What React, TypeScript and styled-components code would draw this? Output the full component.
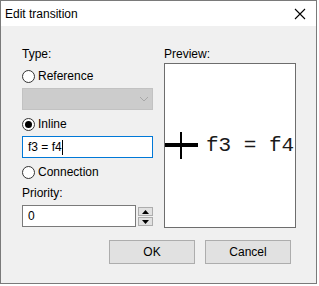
import React from 'react';
import styled, { createGlobalStyle } from 'styled-components';

const GlobalStyle = createGlobalStyle`
  html, body {
    margin: 0;
    padding: 0;
    background: #ffffff;
  }
  body {
    font-family: 'Liberation Sans', Arial, sans-serif;
    font-size: 12px;
    color: #000;
  }
  * {
    box-sizing: border-box;
  }
`;

const Window = styled.div`
  width: 317px;
  height: 284px;
  border: 1px solid #7a7a7a;
  background: #f0f0f0;
  display: flex;
  flex-direction: column;
`;

const TitleBar = styled.div`
  height: 25px;
  background: #ffffff;
  display: flex;
  align-items: center;
  justify-content: space-between;
  padding-left: 4px;
  padding-right: 10px;
  flex-shrink: 0;

  & span {
    font-size: 12px;
    color: #000;
  }
`;

const Body = styled.div`
  flex: 1;
  display: flex;
  flex-direction: column;
  padding: 21px 20px 0 21px;
`;

const Columns = styled.div`
  display: flex;
  gap: 11px;
`;

const LeftColumn = styled.div`
  width: 131px;
  display: flex;
  flex-direction: column;
`;

const RightColumn = styled.div`
  width: 132px;
  display: flex;
  flex-direction: column;
`;

const Label = styled.div<{ $mt?: number }>`
  height: 15px;
  line-height: 15px;
  margin-top: ${(p) => p.$mt ?? 0}px;
`;

const RadioRow = styled.label<{ $mt?: number }>`
  display: flex;
  align-items: center;
  gap: 3px;
  height: 16px;
  margin-top: ${(p) => p.$mt ?? 0}px;
`;

const RadioCircle = styled.span<{ $checked?: boolean }>`
  width: 13px;
  height: 13px;
  border-radius: 50%;
  border: 1px solid #333333;
  background: #ffffff;
  display: flex;
  align-items: center;
  justify-content: center;

  &::after {
    content: '';
    display: ${(p) => (p.$checked ? 'block' : 'none')};
    width: 7px;
    height: 7px;
    border-radius: 50%;
    background: #000;
  }
`;

const Select = styled.div`
  margin-top: 4px;
  height: 22px;
  flex-shrink: 0;
  background: #cccccc;
  border: 1px solid #c2c2c2;
  display: flex;
  align-items: center;
  justify-content: flex-end;
  padding-right: 3px;
`;

const TextInput = styled.div<{ $focused?: boolean; $mt?: number; $grow?: boolean }>`
  margin-top: ${(p) => p.$mt ?? 0}px;
  height: 22px;
  flex-shrink: 0;
  flex-grow: ${(p) => (p.$grow ? 1 : 0)};
  background: #ffffff;
  border: 1px solid ${(p) => (p.$focused ? '#0078d7' : '#7a7a7a')};
  display: flex;
  align-items: center;
  padding-left: 5px;
  font-size: 12px;
`;

const Caret = styled.span`
  display: inline-block;
  width: 1px;
  height: 15px;
  background: #000;
`;

const SpinRow = styled.div`
  margin-top: 4px;
  display: flex;
  align-items: flex-start;
  gap: 2px;
`;

const SpinButtons = styled.div`
  display: flex;
  flex-direction: column;
  gap: 1px;
  margin-top: 2px;
`;

const SpinButton = styled.div`
  width: 15px;
  height: 9px;
  background: #e1e1e1;
  border: 1px solid #adadad;
  display: flex;
  align-items: center;
  justify-content: center;
`;

const PreviewBox = styled.div`
  margin-top: 1px;
  height: 165px;
  background: #ffffff;
  border: 1px solid #6d6d6d;
  display: flex;
  align-items: center;
`;

const Cross = styled.div`
  position: relative;
  width: 33px;
  height: 27px;
  flex-shrink: 0;

  &::before {
    content: '';
    position: absolute;
    left: 0;
    top: 11px;
    width: 33px;
    height: 4px;
    background: #000;
  }

  &::after {
    content: '';
    position: absolute;
    left: 15px;
    top: 0;
    width: 2px;
    height: 27px;
    background: #000;
  }
`;

const PreviewText = styled.span`
  font-family: 'Liberation Mono', 'Courier New', monospace;
  font-size: 21px;
  margin-left: 8px;
  white-space: pre;
  color: #1a1a1a;
`;

const Footer = styled.div`
  display: flex;
  justify-content: flex-end;
  gap: 10px;
  margin-top: 12px;
  padding-right: 5px;
`;

const Button = styled.button`
  width: 86px;
  height: 24px;
  background: #e1e1e1;
  border: 1px solid #adadad;
  font-family: 'Liberation Sans', Arial, sans-serif;
  font-size: 12px;
  color: #000;
  padding: 0;
`;

const App = () => {
  return (
    <>
      <GlobalStyle />
      <Window>
        <TitleBar>
          <span>Edit transition</span>
          <svg width="12" height="12" viewBox="0 0 12 12">
            <path d="M1 1 L11 11 M11 1 L1 11" stroke="#000" strokeWidth="1.1" />
          </svg>
        </TitleBar>
        <Body>
          <Columns>
            <LeftColumn>
              <Label>Type:</Label>
              <RadioRow $mt={6}>
                <RadioCircle />
                <span>Reference</span>
              </RadioRow>
              <Select>
                <svg width="10" height="6" viewBox="0 0 10 6">
                  <path d="M1 1 L5 5 L9 1" stroke="#a8a8a8" fill="none" />
                </svg>
              </Select>
              <RadioRow $mt={6}>
                <RadioCircle $checked />
                <span>Inline</span>
              </RadioRow>
              <TextInput $focused $mt={4}>
                f3 = f4<Caret />
              </TextInput>
              <RadioRow $mt={6}>
                <RadioCircle />
                <span>Connection</span>
              </RadioRow>
              <Label $mt={6}>Priority:</Label>
              <SpinRow>
                <TextInput $grow>0</TextInput>
                <SpinButtons>
                  <SpinButton>
                    <svg width="7" height="4" viewBox="0 0 7 4">
                      <path d="M0 4 L3.5 0 L7 4 Z" fill="#000" />
                    </svg>
                  </SpinButton>
                  <SpinButton>
                    <svg width="7" height="4" viewBox="0 0 7 4">
                      <path d="M0 0 L7 0 L3.5 4 Z" fill="#000" />
                    </svg>
                  </SpinButton>
                </SpinButtons>
              </SpinRow>
            </LeftColumn>
            <RightColumn>
              <Label>Preview:</Label>
              <PreviewBox>
                <Cross />
                <PreviewText>f3 = f4</PreviewText>
              </PreviewBox>
            </RightColumn>
          </Columns>
          <Footer>
            <Button>OK</Button>
            <Button>Cancel</Button>
          </Footer>
        </Body>
      </Window>
    </>
  );
};

export default App;
